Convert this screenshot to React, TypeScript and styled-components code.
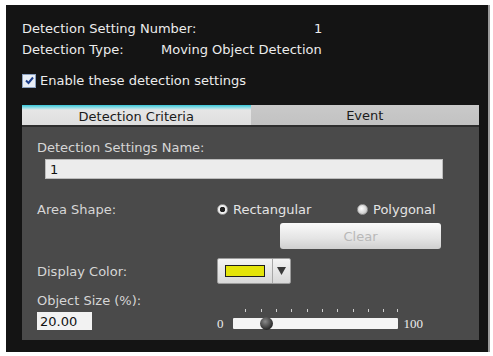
import styled, { createGlobalStyle } from "styled-components";

const Global = createGlobalStyle`
  html, body {
    margin: 0;
    padding: 0;
    background: #ffffff;
  }
  body {
    font-family: "DejaVu Sans", "Liberation Sans", sans-serif;
  }
`;

const Frame = styled.div`
  width: 484px;
  height: 347px;
  margin: 5px 0 0 6px;
  box-sizing: border-box;
  background: #141414;
  border-right: 2px solid #9a9a9a;
  padding: 13px 9px 0 16px;
  color: #ececec;
  font-size: 13px;
  display: flex;
  flex-direction: column;
`;

const InfoRow = styled.div`
  height: 21px;
  display: flex;
  align-items: center;
`;

const InfoLabel = styled.span<{ $w: number }>`
  width: ${(p) => p.$w}px;
  flex-shrink: 0;
`;

const CheckRow = styled.label`
  height: 21px;
  margin-top: 10px;
  display: flex;
  align-items: center;
  gap: 4px;
`;

const CheckBox = styled.span`
  width: 12px;
  height: 12px;
  background: #e8eef6;
  border: 1px solid #8aa0c0;
  display: flex;
  align-items: center;
  justify-content: center;
`;

const Tabs = styled.div`
  margin-top: 14px;
  display: flex;
  height: 22px;
  width: 457px;
`;

const Tab = styled.div<{ $active?: boolean }>`
  flex: 1;
  display: flex;
  align-items: center;
  justify-content: center;
  color: #1a1a1a;
  font-size: 13px;
  box-sizing: border-box;
  background: ${(p) =>
    p.$active
      ? "linear-gradient(#35c6d8 0, #9fe0e8 3px, #e6e6e6 5px, #dedede 100%)"
      : "linear-gradient(#c9c9c9, #c2c2c2)"};
  border-bottom: 2px solid #2e2e2e;
  padding-top: ${(p) => (p.$active ? "3px" : "0")};
`;

const Body = styled.div`
  width: 457px;
  height: 213px;
  box-sizing: border-box;
  background: #4a4a4a;
  padding: 12px 0 0 15px;
  color: #d6d6d6;
  display: flex;
  flex-direction: column;
`;

const FieldLabel = styled.div<{ $top?: number }>`
  margin-top: ${(p) => p.$top ?? 0}px;
  height: 17px;
  display: flex;
  align-items: center;
`;

const NameInput = styled.div`
  margin: 3px 0 0 8px;
  width: 398px;
  height: 20px;
  box-sizing: border-box;
  background: #ececec;
  border: 1px solid #bcbcbc;
  color: #111;
  padding-left: 4px;
  display: flex;
  align-items: center;
  font-size: 13px;
`;

const Row = styled.div<{ $top: number; $h: number }>`
  margin-top: ${(p) => p.$top}px;
  height: ${(p) => p.$h}px;
  display: flex;
  align-items: center;
`;

const RowLabel = styled.div`
  width: 180px;
  flex-shrink: 0;
`;

const Radio = styled.span<{ $checked?: boolean }>`
  width: 11px;
  height: 11px;
  border-radius: 50%;
  box-sizing: border-box;
  background: ${(p) =>
    p.$checked
      ? "radial-gradient(circle, #222 0 2.5px, #f0f0f0 3px)"
      : "radial-gradient(circle at 40% 40%, #ffffff, #b8b8b8)"};
  border: 1px solid #9a9a9a;
  margin-right: 5px;
`;

const RadioText = styled.span<{ $w: number }>`
  width: ${(p) => p.$w}px;
  color: #e4e4e4;
`;

const ClearButton = styled.div`
  margin: 0 0 0 243px;
  width: 161px;
  height: 26px;
  box-sizing: border-box;
  border-radius: 3px;
  background: linear-gradient(#fafafa, #e4e4e4 60%, #cfcfcf);
  color: #b8b8b8;
  display: flex;
  align-items: center;
  justify-content: center;
  font-size: 13px;
`;

const ColorPicker = styled.div`
  width: 74px;
  height: 26px;
  display: flex;
  border-radius: 2px;
  background: linear-gradient(#f4f4f4, #d8d8d8);
  box-sizing: border-box;
  border: 1px solid #9c9c9c;
`;

const SwatchCell = styled.div`
  width: 54px;
  display: flex;
  align-items: center;
  justify-content: center;
  border-right: 1px solid #a8a8a8;
`;

const Swatch = styled.div`
  width: 38px;
  height: 10px;
  background: #e4e40a;
  border: 1px solid #1e1e1e;
`;

const ArrowCell = styled.div`
  flex: 1;
  display: flex;
  align-items: center;
  justify-content: center;
`;

const SizeRow = styled.div`
  margin-top: 2px;
  height: 20px;
  display: flex;
  align-items: center;
`;

const SizeInput = styled.div`
  width: 55px;
  height: 18px;
  box-sizing: border-box;
  background: #f2f2f2;
  color: #111;
  font-size: 13px;
  padding-left: 3px;
  display: flex;
  align-items: center;
  margin-right: 125px;
`;

const SliderEnd = styled.span`
  font-family: "Liberation Serif", serif;
  font-size: 13px;
  color: #ececec;
  margin-top: 6px;
`;

const SliderBox = styled.div`
  position: relative;
  width: 165px;
  height: 11px;
  margin: 5px 6px 0 9px;
  background: #f4f4f4;
  border-radius: 1px;
`;

const Tick = styled.span`
  position: absolute;
  top: -9px;
  width: 1px;
  height: 3px;
  background: #cfcfcf;
`;

const Thumb = styled.span`
  position: absolute;
  top: -1px;
  width: 13px;
  height: 13px;
  border-radius: 50%;
  background: radial-gradient(circle at 40% 35%, #8a8a8a, #2a2a2a 70%);
`;

export default function App() {
  const ticks = [12, 28, 43, 58, 74, 89, 104, 120, 135, 150, 164];
  return (
    <>
      <Global />
      <Frame>
        <InfoRow>
          <InfoLabel $w={292}>Detection Setting Number:</InfoLabel>
          <span>1</span>
        </InfoRow>
        <InfoRow>
          <InfoLabel $w={139}>Detection Type:</InfoLabel>
          <span>Moving Object Detection</span>
        </InfoRow>
        <CheckRow>
          <CheckBox>
            <svg width="9" height="9" viewBox="0 0 9 9">
              <path d="M1 4.5 L3.5 7 L8 1.5" stroke="#1d3f8c" strokeWidth="2" fill="none" />
            </svg>
          </CheckBox>
          Enable these detection settings
        </CheckRow>
        <Tabs>
          <Tab $active>Detection Criteria</Tab>
          <Tab>Event</Tab>
        </Tabs>
        <Body>
          <FieldLabel>Detection Settings Name:</FieldLabel>
          <NameInput>1</NameInput>
          <Row $top={20} $h={20}>
            <RowLabel>Area Shape:</RowLabel>
            <Radio $checked />
            <RadioText $w={124}>Rectangular</RadioText>
            <Radio />
            <RadioText $w={70}>Polygonal</RadioText>
          </Row>
          <Row $top={4} $h={26}>
            <ClearButton>Clear</ClearButton>
          </Row>
          <Row $top={9} $h={26}>
            <RowLabel>Display Color:</RowLabel>
            <ColorPicker>
              <SwatchCell>
                <Swatch />
              </SwatchCell>
              <ArrowCell>
                <svg width="9" height="8" viewBox="0 0 9 8">
                  <path d="M0 0 H9 L4.5 8 Z" fill="#3a3a3a" />
                </svg>
              </ArrowCell>
            </ColorPicker>
          </Row>
          <FieldLabel $top={8}>Object Size (%):</FieldLabel>
          <SizeRow>
            <SizeInput>20.00</SizeInput>
            <SliderEnd>0</SliderEnd>
            <SliderBox>
              {ticks.map((t) => (
                <Tick key={t} style={{ left: t }} />
              ))}
              <Thumb style={{ left: 27 }} />
            </SliderBox>
            <SliderEnd>100</SliderEnd>
          </SizeRow>
        </Body>
      </Frame>
    </>
  );
}
